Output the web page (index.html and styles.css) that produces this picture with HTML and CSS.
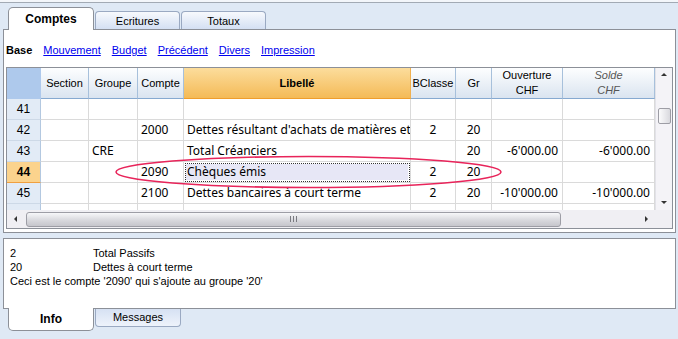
FILE: index.html
```html
<!DOCTYPE html>
<html lang="fr">
<head>
    <meta charset="UTF-8">
    <title>Comptes</title>
    <link rel="stylesheet" href="styles.css">
</head>
<body>

<div class="topbar"></div>

<!-- Onglets du haut -->
<div class="tabs">
    <div class="tab on">Comptes</div>
    <div class="tab">Ecritures</div>
    <div class="tab">Totaux</div>
</div>

<div class="panel">
    <div class="subnav">
        <b>Base</b>
        <a href="#">Mouvement</a>
        <a href="#">Budget</a>
        <a href="#">Précédent</a>
        <a href="#">Divers</a>
        <a href="#">Impression</a>
    </div>

    <div class="sheet">
        <div class="cells">
            <div class="h corner-h"></div>
            <div class="h">Section</div>
            <div class="h">Groupe</div>
            <div class="h">Compte</div>
            <div class="h lib">Libellé</div>
            <div class="h">BClasse</div>
            <div class="h">Gr</div>
            <div class="h">Ouverture<br>CHF</div>
            <div class="h solde">Solde<br>CHF</div>

            <div class="n">41</div>
            <div class="c"></div><div class="c"></div><div class="c"></div><div class="c"></div>
            <div class="c"></div><div class="c"></div><div class="c"></div><div class="c"></div>

            <div class="n">42</div>
            <div class="c"></div><div class="c"></div><div class="c">2000</div>
            <div class="c">Dettes résultant d'achats de matières et de prestations de services</div>
            <div class="c mid">2</div><div class="c mid">20</div><div class="c"></div><div class="c"></div>

            <div class="n">43</div>
            <div class="c"></div><div class="c">CRE</div><div class="c"></div>
            <div class="c">Total Créanciers</div>
            <div class="c"></div><div class="c mid">20</div>
            <div class="c num">-6'000.00</div><div class="c num">-6'000.00</div>

            <div class="n cur">44</div>
            <div class="c"></div><div class="c"></div><div class="c">2090</div>
            <div class="c sel">Chèques émis</div>
            <div class="c mid">2</div><div class="c mid">20</div><div class="c"></div><div class="c"></div>

            <div class="n">45</div>
            <div class="c"></div><div class="c"></div><div class="c">2100</div>
            <div class="c">Dettes bancaires à court terme</div>
            <div class="c mid">2</div><div class="c mid">20</div>
            <div class="c num">-10'000.00</div><div class="c num">-10'000.00</div>

            <!-- ligne suivante, coupée par la barre de défilement -->
            <div class="n"></div>
            <div class="c"></div><div class="c"></div><div class="c"></div><div class="c"></div>
            <div class="c"></div><div class="c"></div><div class="c"></div><div class="c"></div>
        </div>

        <!-- Barres de défilement -->
        <div class="vscroll">
            <span class="arr up"></span>
            <span class="vthumb"></span>
            <span class="arr down"></span>
        </div>
        <div class="hscroll">
            <span class="arr left"></span>
            <span class="hthumb"><span class="grip"></span></span>
            <span class="arr right"></span>
        </div>
        <div class="corner"></div>
    </div>
</div>

<!-- Zone d'information -->
<div class="info">
    <div class="line"><span class="k">2</span><span>Total Passifs</span></div>
    <div class="line"><span class="k">20</span><span>Dettes à court terme</span></div>
    <div class="line">Ceci est le compte '2090' qui s'ajoute au groupe '20'</div>
</div>

<div class="btabs">
    <div class="btab on">Info</div>
    <div class="btab">Messages</div>
</div>

<!-- Annotation -->
<svg class="mark" width="678" height="339" viewBox="0 0 678 339">
    <ellipse cx="308.5" cy="172" rx="192.5" ry="15.5" fill="none" stroke="#e8245a" stroke-width="1.6"/>
</svg>

</body>
</html>
```

FILE: styles.css
```css
/* Page */
body {
    margin: 0;
    width: 678px;
    height: 339px;
    overflow: hidden;
    position: relative;
    background: #dfe9f5;
    font-family: "Liberation Sans", Arial, sans-serif;
    font-size: 11px;
    color: #000;
}
.topbar {
    height: 2px;
    background: #f3f6fa;
    border-bottom: 1px solid #a2aab4;
}

/* Onglets du haut */
.tabs {
    display: flex;
    align-items: flex-end;
    gap: 1px;
    height: 26px;
    padding-left: 8px;
}
.tab {
    width: 85px;
    height: 18px;
    box-sizing: border-box;
    border: 1px solid #9aa9c2;
    border-bottom: none;
    border-radius: 4px 4px 0 0;
    background: linear-gradient(#f7f9fd, #d4e0f3);
    text-align: center;
    line-height: 18px;
}
.tab.on {
    width: 86px;
    height: 23px;
    margin-bottom: -1px;
    position: relative;
    border-color: #8c9098;
    border-radius: 5px 5px 0 0;
    background: #fff;
    font-size: 12px;
    font-weight: bold;
    line-height: 22px;
}

/* Panneau principal */
.panel {
    margin: 0 2px 0 3px;
    padding: 0 2px 3px;
    background: #fff;
    border: 1px solid #8c9098;
}
.subnav {
    height: 37px;
    box-sizing: border-box;
    padding-top: 14px;
    display: flex;
    gap: 11px;
    line-height: 13px;
}
.subnav a {
    color: #0000ee;
}

/* Tableau */
.sheet {
    display: grid;
    grid-template-columns: 648px 17px;
    grid-template-rows: 142px 18px;
    border: 1px solid #8c9098;
}
.cells {
    overflow: hidden;
    display: grid;
    grid-template-columns: 34px 48px 49px 46px 227px 45px 36px 71px 92px;
    grid-template-rows: 31px;
    grid-auto-rows: 21px;
    font-family: "Noto Sans", sans-serif;
    font-size: 12px;
}
.h {
    display: flex;
    align-items: center;
    justify-content: center;
    text-align: center;
    font-family: "Liberation Sans", Arial, sans-serif;
    font-size: 11px;
    line-height: 15px;
    background: linear-gradient(#fdfeff, #dae4f0);
    border-right: 1px solid #a7c0db;
    border-bottom: 1px solid #86a9d0;
}
.h.corner-h {
    background: #aec9ec;
    border-right-color: #aec9ec;
    border-bottom-color: #aec9ec;
}
.h.lib {
    font-weight: bold;
    background: linear-gradient(#fcdd9c, #f4ba57);
    border-right-color: #f0b050;
    border-bottom-color: #ef9d2c;
}
.h.solde {
    font-style: italic;
    color: #555;
}
.n {
    text-align: center;
    font-family: "Liberation Sans", Arial, sans-serif;
    font-size: 12px;
    line-height: 20px;
    background: #e2ebf6;
    border-right: 1px solid #b3c8e0;
    border-bottom: 1px solid #cdd9e7;
}
.n.cur {
    background: #fbd38d;
    border-bottom-color: #f0a040;
    font-weight: bold;
}
.c {
    padding: 0 3px;
    line-height: 20px;
    white-space: nowrap;
    overflow: hidden;
    border-right: 1px solid #dadada;
    border-bottom: 1px solid #dadada;
}
.c.mid {
    text-align: center;
}
.c.num {
    text-align: right;
    padding-right: 4px;
}
.c.sel {
    background: #e7e7f6;
    outline: 1px dotted #333;
    outline-offset: -2px;
    box-shadow: inset 0 0 0 2px #fff;
}

/* Barres de défilement */
.vscroll {
    display: flex;
    flex-direction: column;
    align-items: center;
    background: #f4f3f7;
    border-left: 1px solid #e2e2e8;
}
.hscroll {
    display: flex;
    align-items: center;
    padding-left: 7px;
    background: #f0eff3;
}
.corner {
    background: #f0eff3;
}
.arr {
    width: 0;
    height: 0;
    border: 3px solid transparent;
}
.arr.up {
    margin-top: 5px;
    border-top: none;
    border-bottom-color: #333;
}
.arr.down {
    margin-top: auto;
    margin-bottom: 6px;
    border-bottom: none;
    border-top-color: #333;
}
.arr.left {
    border-left: none;
    border-right-color: #333;
}
.arr.right {
    margin-left: auto;
    margin-right: 7px;
    border-right: none;
    border-left-color: #333;
}
.vthumb {
    margin-top: 32px;
    width: 13px;
    height: 16px;
    box-sizing: border-box;
    border: 1px solid #9d9da5;
    border-radius: 2px;
    background: linear-gradient(90deg, #fbfbfc, #d9d9de);
}
.hthumb {
    margin-left: 9px;
    width: 535px;
    height: 15px;
    box-sizing: border-box;
    display: flex;
    align-items: center;
    justify-content: center;
    border: 1px solid #9d9da5;
    border-radius: 3px;
    background: linear-gradient(#f7f7f9, #d6d6db 60%, #c6c6cc);
}
.grip {
    width: 7px;
    height: 6px;
    background: repeating-linear-gradient(90deg, #7a7a80 0 1px, transparent 1px 3px);
}

/* Zone d'information */
.info {
    margin: 5px 2px 0 3px;
    height: 71px;
    box-sizing: border-box;
    padding: 7px 6px 0;
    background: #fff;
    border: 1px solid #8c9098;
    line-height: 14px;
}
.line {
    display: flex;
}
.line .k {
    width: 83px;
}

/* Onglets du bas */
.btabs {
    display: flex;
    align-items: flex-start;
    gap: 1px;
    margin-top: -1px;
    padding-left: 8px;
}
.btab {
    width: 86px;
    height: 18px;
    margin-top: 1px;
    box-sizing: border-box;
    border: 1px solid #9aa9c2;
    border-top: none;
    border-radius: 0 0 4px 4px;
    background: linear-gradient(#d6e1f3, #eef3fb);
    text-align: center;
    line-height: 17px;
}
.btab.on {
    height: 23px;
    margin-top: 0;
    position: relative;
    border-color: #8c9098;
    border-radius: 0 0 5px 5px;
    background: #fff;
    font-size: 12px;
    font-weight: bold;
    line-height: 22px;
}

/* Annotation */
.mark {
    position: absolute;
    left: 0;
    top: 0;
    pointer-events: none;
}
```
